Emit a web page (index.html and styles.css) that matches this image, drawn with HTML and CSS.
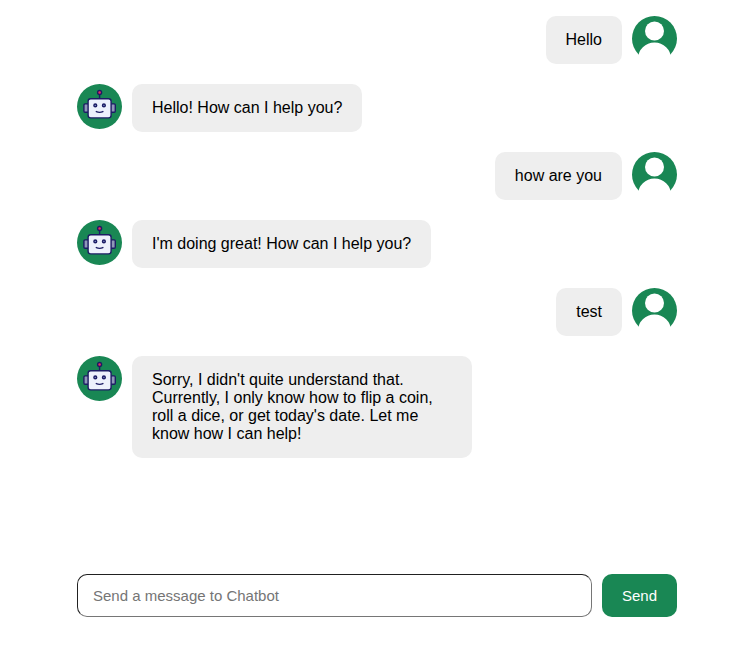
FILE: index.html
```html
<!DOCTYPE html>
<html lang="en">
<head>
<meta charset="utf-8">
<title>Chatbot</title>
<link rel="stylesheet" href="styles.css">
</head>
<body>
<svg class="symbols" aria-hidden="true">
  <symbol id="user" viewBox="0 0 45 45">
    <circle cx="22.5" cy="22.5" r="22.5" fill="#198754"/>
    <circle cx="22.5" cy="15" r="9.5" fill="#fff"/>
    <path d="M6 46V42.5a16.5 16 0 0 1 33 0V46z" fill="#fff"/>
  </symbol>
  <symbol id="robot" viewBox="0 0 45 45">
    <circle cx="22.5" cy="22.5" r="22.5" fill="#198754"/>
    <g stroke="#1c1c64" stroke-width="1.4" stroke-linejoin="round" stroke-linecap="round">
      <rect x="6.9" y="19.9" width="5" height="8.4" rx="1.2" fill="#8f98b8"/>
      <rect x="33.3" y="19.9" width="5" height="8.4" rx="1.2" fill="#8f98b8"/>
      <path d="M22.6 10.8v3.6"/>
      <circle cx="22.6" cy="8.5" r="2" fill="#f0285f"/>
      <rect x="11.1" y="14.7" width="23" height="19.2" rx="2.6" fill="#edf1fc"/>
      <circle cx="18.3" cy="21.4" r="1.4" fill="#8090c8"/>
      <circle cx="26.9" cy="21.4" r="1.4" fill="#8090c8"/>
      <path d="M19.3 27.6q3.3 1.5 6.6 0" fill="none"/>
    </g>
  </symbol>
</svg>
<div class="chat">
  <main class="messages">
    <div class="message from-user"><p class="bubble">Hello</p><svg class="avatar"><use href="#user"/></svg></div>
    <div class="message"><svg class="avatar"><use href="#robot"/></svg><p class="bubble">Hello! How can I help you?</p></div>
    <div class="message from-user"><p class="bubble">how are you</p><svg class="avatar"><use href="#user"/></svg></div>
    <div class="message"><svg class="avatar"><use href="#robot"/></svg><p class="bubble">I'm doing great! How can I help you?</p></div>
    <div class="message from-user"><p class="bubble">test</p><svg class="avatar"><use href="#user"/></svg></div>
    <div class="message"><svg class="avatar"><use href="#robot"/></svg><p class="bubble">Sorry, I didn't quite understand that. Currently, I only know how to flip a coin, roll a dice, or get today's date. Let me know how I can help!</p></div>
  </main>
  <form class="composer">
    <input class="field" type="text" placeholder="Send a message to Chatbot">
    <button class="send" type="button">Send</button>
  </form>
</div>
</body>
</html>
```

FILE: styles.css
```css
* { box-sizing: border-box; }
body {
  margin: 0;
  background: #fff;
  color: #000;
  font: 16px/18px "Liberation Sans", Arial, sans-serif;
}
.symbols { display: none; }
.chat {
  display: flex;
  flex-direction: column;
  width: 600px;
  height: 664px;
  margin-left: 77px;
  padding: 16px 0 47px;
}
.messages {
  display: flex;
  flex: 1;
  flex-direction: column;
  gap: 20px;
}
.message {
  display: flex;
  align-items: flex-start;
  gap: 10px;
}
.from-user { justify-content: flex-end; }
.avatar {
  flex: none;
  width: 45px;
  height: 45px;
}
.bubble {
  max-width: 340px;
  margin: 0;
  padding: 15px 20px;
  border-radius: 10px;
  background: #eee;
}
.composer {
  display: flex;
  gap: 10px;
}
.field, .send {
  height: 43px;
  border-radius: 10px;
  font-family: inherit;
  font-size: 15px;
}
.field {
  flex: 1;
  min-width: 0;
  padding: 12px 15px;
  border: 1px inset #767676;
}
.send {
  padding: 0 20px;
  border: 0;
  background: #198754;
  color: #fff;
}
```
